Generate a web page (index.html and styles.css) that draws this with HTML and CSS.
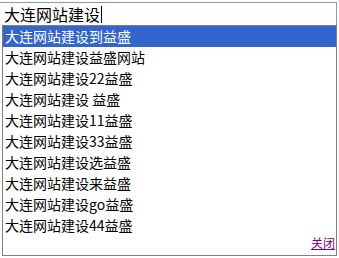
FILE: index.html
```html
<!DOCTYPE html>
<html lang="zh-CN">
<head>
<meta charset="utf-8">
<title>大连网站建设</title>
<link rel="stylesheet" href="styles.css">
</head>
<body>
<div class="widget">
  <div class="search"><span class="query">大连网站建设</span><span class="caret"></span></div>
  <div class="suggest">
    <ul class="list">
      <li class="item selected">大连网站建设到益盛</li>
      <li class="item">大连网站建设益盛网站</li>
      <li class="item">大连网站建设22益盛</li>
      <li class="item">大连网站建设 益盛</li>
      <li class="item">大连网站建设11益盛</li>
      <li class="item">大连网站建设33益盛</li>
      <li class="item">大连网站建设选益盛</li>
      <li class="item">大连网站建设来益盛</li>
      <li class="item">大连网站建设go益盛</li>
      <li class="item">大连网站建设44益盛</li>
    </ul>
    <div class="footer"><a class="close" href="#">关闭</a></div>
  </div>
</div>
</body>
</html>
```

FILE: styles.css
```css
html, body {
  margin: 0;
  padding: 0;
  background: #ffffff;
}

body {
  font-family: "Noto Sans CJK SC", "DejaVu Sans", sans-serif;
  color: #000000;
}

.widget {
  width: 337px;
  padding-top: 2px;
}

.search {
  display: flex;
  align-items: center;
  height: 22px;
  border-top: 1px solid #7f9db9;
  border-right: 1px solid #7f9db9;
  padding-left: 4px;
  font-size: 16px;
  line-height: 22px;
}

.query {
  letter-spacing: 0;
}

.caret {
  display: inline-block;
  width: 1px;
  height: 17px;
  margin-left: 1px;
  background: #000000;
}

.suggest {
  margin-left: 2px;
  border: 1px solid #808080;
  background: #ffffff;
}

.list {
  list-style: none;
  margin: 0;
  padding: 0;
}

.item {
  height: 21px;
  line-height: 20px;
  padding-left: 2px;
  font-size: 14px;
  white-space: pre;
}

.item.selected {
  background: #3366cc;
  color: #ffffff;
}

.footer {
  display: flex;
  justify-content: flex-end;
  align-items: flex-end;
  height: 19px;
  padding-right: 1px;
}

.close {
  font-size: 12px;
  line-height: 14px;
  color: #800080;
  text-decoration: underline;
  margin-bottom: 5px;
}
```
